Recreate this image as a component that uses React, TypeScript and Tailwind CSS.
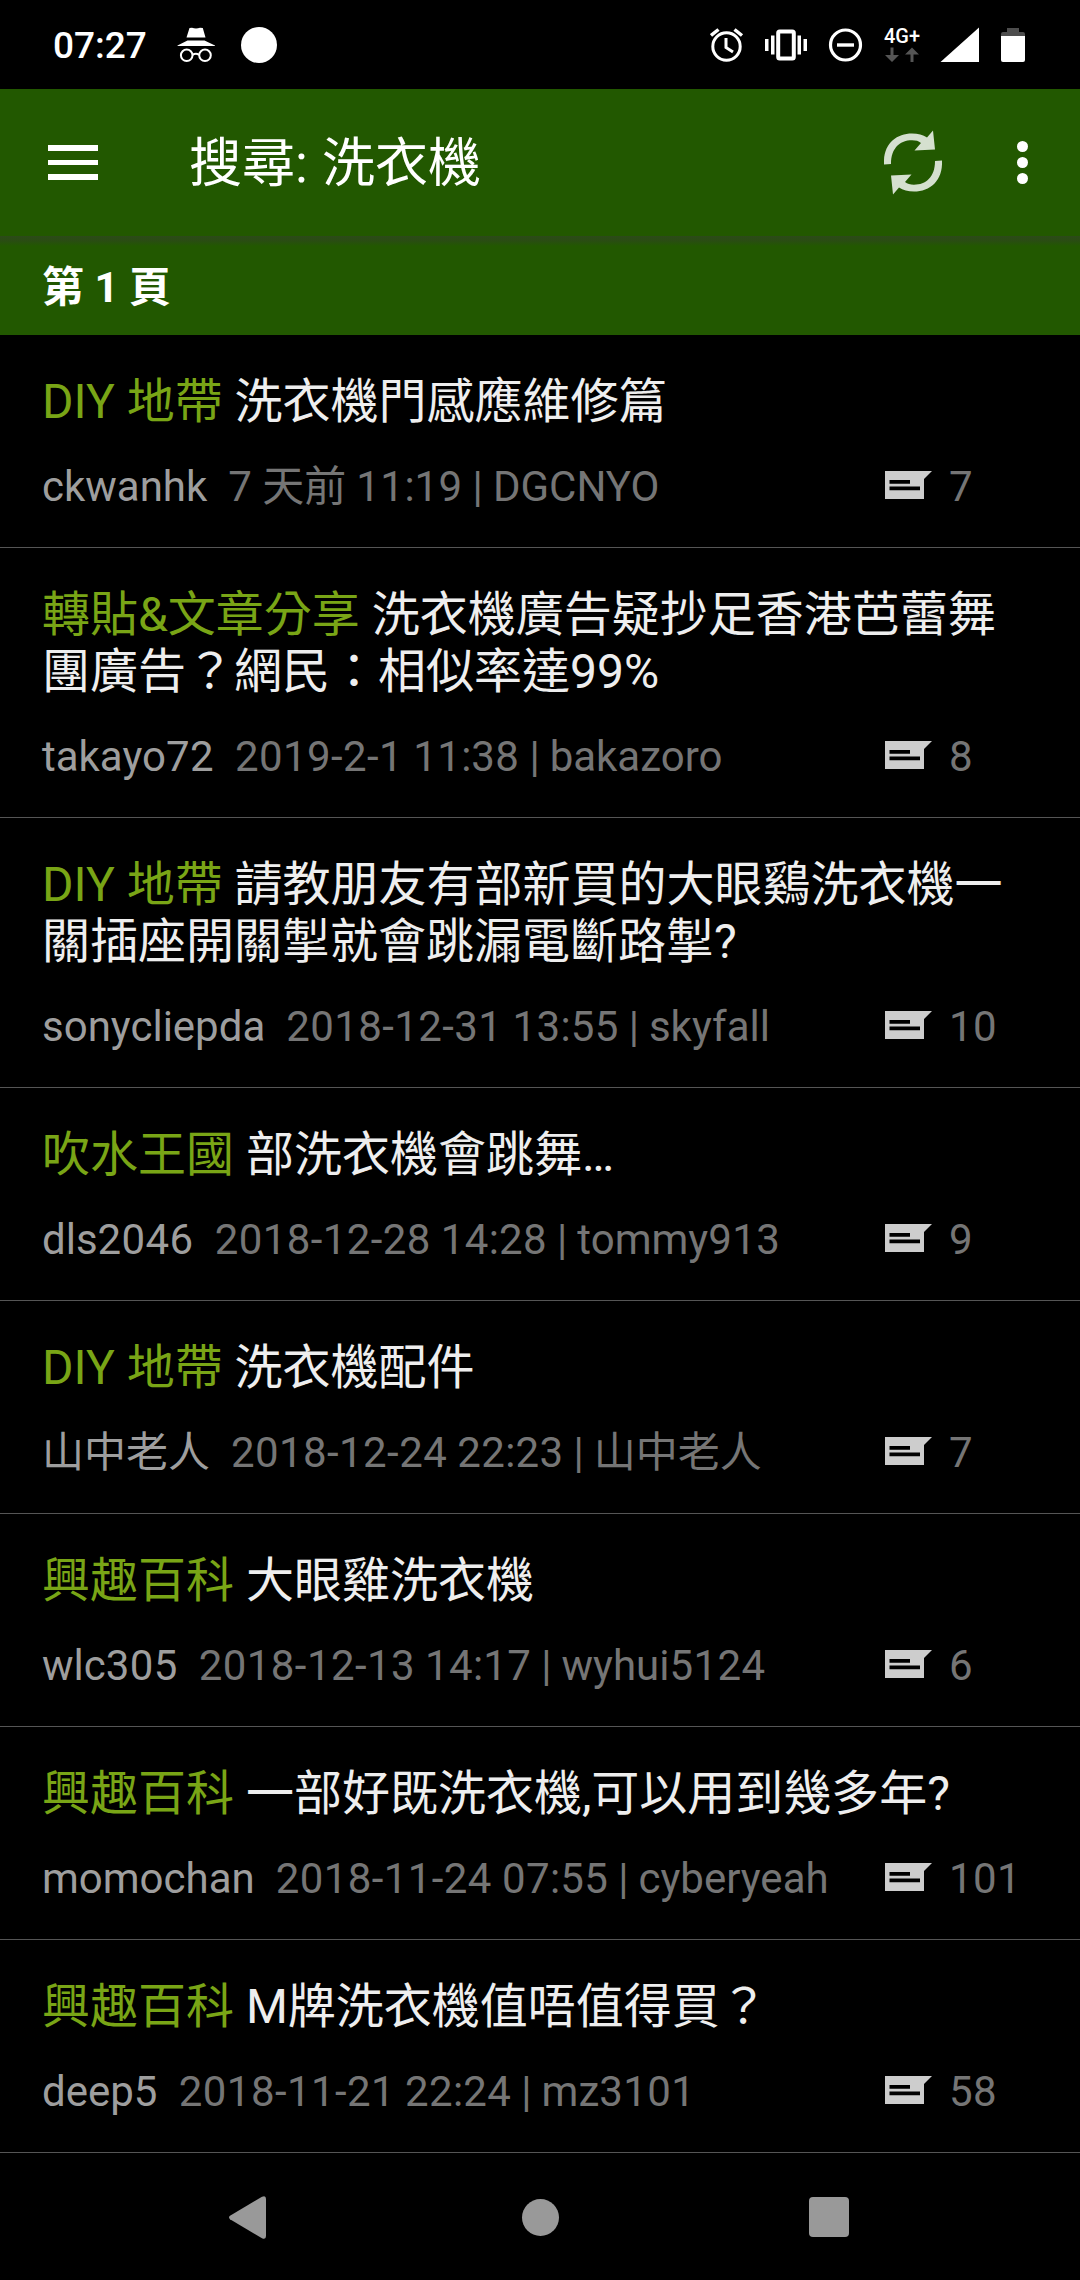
type Thread = {
  forum: string;
  title: string;
  author: string;
  time: string;
  lastReply: string;
  replies: number;
};

const threads: Thread[] = [
  { forum: "DIY 地帶", title: "洗衣機門感應維修篇", author: "ckwanhk", time: "7 天前 11:19", lastReply: "DGCNYO", replies: 7 },
  { forum: "轉貼&文章分享", title: "洗衣機廣告疑抄足香港芭蕾舞團廣告？網民：相似率達99%", author: "takayo72", time: "2019-2-1 11:38", lastReply: "bakazoro", replies: 8 },
  { forum: "DIY 地帶", title: "請教朋友有部新買的大眼鷄洗衣機一關插座開關掣就會跳漏電斷路掣?", author: "sonycliepda", time: "2018-12-31 13:55", lastReply: "skyfall", replies: 10 },
  { forum: "吹水王國", title: "部洗衣機會跳舞…", author: "dls2046", time: "2018-12-28 14:28", lastReply: "tommy913", replies: 9 },
  { forum: "DIY 地帶", title: "洗衣機配件", author: "山中老人", time: "2018-12-24 22:23", lastReply: "山中老人", replies: 7 },
  { forum: "興趣百科", title: "大眼雞洗衣機", author: "wlc305", time: "2018-12-13 14:17", lastReply: "wyhui5124", replies: 6 },
  { forum: "興趣百科", title: "一部好既洗衣機,可以用到幾多年?", author: "momochan", time: "2018-11-24 07:55", lastReply: "cyberyeah", replies: 101 },
  { forum: "興趣百科", title: "M牌洗衣機值唔值得買？", author: "deep5", time: "2018-11-21 22:24", lastReply: "mz3101", replies: 58 },
];

function StatusBar() {
  return (
    <div className="flex h-[89px] items-center justify-between pl-[53px] pr-[54px] text-white">
      <div className="flex items-center">
        <span className="w-[93px] whitespace-nowrap pt-[2px] text-[37px] font-medium leading-[44px]">07:27</span>
        <svg className="ml-[31px]" width="38" height="38" viewBox="0 0 38 38" fill="#fff">
          <path d="M12.500 2 L15 1.800 Q19 3.200 23 1.800 L25.800 2 L28.500 11.500 H9.500 Z" />
          <path d="M10.500 14.500 H27.500 L38 19.500 V20 H0.500 V19.500 Z" />
          <g fill="none" stroke="#fff" strokeWidth="2">
            <circle cx="9.700" cy="29.300" r="5.800" />
            <circle cx="28" cy="29.300" r="5.800" />
            <path d="M15.500 28.800 Q19 26.800 22 28.800" />
          </g>
        </svg>
        <span className="ml-[26px] size-9 rounded-full bg-white" />
      </div>
      <StatusIcons />
    </div>
  );
}

function StatusIcons() {
  return (
    <svg width="316" height="64" viewBox="710 12 316 64" fill="#fff">
      {/* alarm */}
      <g fill="none" stroke="#fff" strokeWidth="3">
        <circle cx="726.500" cy="45.500" r="13.700" />
        <path d="M726 37 V46.500 L733 51" />
        <path d="M711 34.500 L718.500 28.500 M742 34.500 L734.500 28.500" strokeWidth="3.500" />
      </g>
      {/* vibrate */}
      <path d="M765 38h3.500v12H765zM771 34.500h3.500v19H771zM797.500 34.500h3.500v19h-3.500zM803.500 38h3.500v12h-3.500z" />
      <rect x="778.200" y="30.500" width="15.600" height="27" rx="1.500" fill="none" stroke="#fff" strokeWidth="4" />
      {/* do not disturb */}
      <circle cx="845.500" cy="44" r="15" fill="none" stroke="#fff" strokeWidth="3.200" />
      <path d="M837 42.300h17v3.400h-17z" />
      {/* mobile data */}
      <text x="884" y="42" fontSize="21" fontWeight="500" textLength="36" lengthAdjust="spacingAndGlyphs">4G+</text>
      <path d="M890.500 46.500h3v7.500h5.500l-7 7-7-7h5.500zM910.500 61h3v-7.500h5.500l-7-7-7 7h5.500z" fill="#555" />
      {/* signal */}
      <path d="M979 26.500V61h-38.500z" />
      {/* battery */}
      <path d="M1007 27h12v4h4a2 2 0 0 1 2 2v2.500h-24V33a2 2 0 0 1 2-2h4z" fill="#4d4d4d" />
      <path d="M1001 35h24v24a2 2 0 0 1-2 2h-20a2 2 0 0 1-2-2z" />
    </svg>
  );
}

function Toolbar() {
  return (
    <header className="flex h-[147px] items-center bg-[#225800] pl-[48px] pr-[52px] text-white">
      <div className="flex w-[50px] flex-col gap-[9px]">
        <span className="h-[6px] bg-white" />
        <span className="h-[5px] bg-white" />
        <span className="h-[6px] bg-white" />
      </div>
      <h1 className="ml-[91px] flex-1 pt-[2px] text-[53px] leading-[62px] [word-spacing:1px]">搜尋: 洗衣機</h1>
      <svg width="60" height="66" viewBox="0 0 60 66" fill="#d5e0cf">
        <path d="M0 34.500 C-1 14 12 3.500 28 3.500 C34 3.500 39 5 43 7.500 L49 0.500 L51 19.500 L30.500 20.500 L37 13 C34.500 11 32 10.300 28 10.300 C16 10.300 7 18 7 34 Z" />
        <path d="M58 30.500 C59 51 46 61.500 30 61.500 C24 61.500 19 60 15 57.500 L9 64.500 L7 45.500 L27.500 44.500 L21 52 C23.500 54 26 54.700 30 54.700 C42 54.700 51 47 51 31 Z" />
      </svg>
      <div className="ml-[73px] flex flex-col gap-[5px]">
        <span className="size-[11px] rounded-full bg-white" />
        <span className="size-[11px] rounded-full bg-white" />
        <span className="size-[11px] rounded-full bg-white" />
      </div>
    </header>
  );
}

function ReplyIcon() {
  return (
    <svg className="mt-[9px] shrink-0" width="47" height="28" viewBox="0 0 47 28">
      <path d="M0 0H47L39 8V28H0Z" fill="#cdcdcd" />
      <path d="M4.500 9H25V12.800H4.500ZM4.500 15.500H35V19.300H4.500Z" fill="#000" />
    </svg>
  );
}

// Digits and dashes are set slightly wider than the letters around them.
function MetaText({ text }: { text: string }) {
  return text.split(/([\d-]+)/).map((part, index) =>
    index % 2 === 1 ? (
      <span key={index} className="tracking-[0.41px]">
        {part}
      </span>
    ) : (
      part
    )
  );
}

function ThreadRow({ thread }: { thread: Thread }) {
  return (
    <li className="border-b border-[#555] px-[42px] pb-[35px] pt-[38px]">
      <h2 className="text-[48px] leading-[57px] text-[#eee] [word-break:break-all]">
        <span className="text-[#79a516]">{thread.forum}</span> {thread.title}
      </h2>
      <div className="mt-8 flex h-[50px] text-[42px] leading-[50px] text-[#757575] [word-spacing:-0.4px]">
        <span className="text-[#9e9e9e]">
          <MetaText text={thread.author} />
        </span>
        <span className="ml-[21px] flex-1 whitespace-nowrap">
          <MetaText text={`${thread.time} | ${thread.lastReply}`} />
        </span>
        <div className="flex w-[153px] shrink-0">
          <ReplyIcon />
          <span className="ml-[17px]">
            <MetaText text={String(thread.replies)} />
          </span>
        </div>
      </div>
    </li>
  );
}

function NavigationBar() {
  return (
    <nav className="flex h-[128px] items-center pl-[229px]">
      <svg width="37" height="43" viewBox="0 0 37 43" fill="#999">
        <path d="M33 0.800 Q37 -1 37 3 V40 Q37 44 33 42.200 L1 23.200 Q-1 21.500 1 19.800 Z" />
      </svg>
      <span className="ml-[256px] size-[37px] rounded-full bg-[#999]" />
      <span className="ml-[250px] size-[40px] rounded-[4px] bg-[#999]" />
    </nav>
  );
}

export default function App() {
  return (
    <div className="h-[2280px] w-[1080px] overflow-hidden bg-black font-[Roboto,'Noto_Sans_CJK_TC',sans-serif]">
      <StatusBar />
      <Toolbar />
      <div className="h-[99px] bg-[#225800] bg-[linear-gradient(#2c4a19,#294d12_50%,#225800)] bg-[length:100%_10px] bg-no-repeat px-[42px] pt-[27px] text-[42px] font-bold leading-[50px] text-white">
        第 1 頁
      </div>
      <ul>
        {threads.map((thread) => (
          <ThreadRow key={thread.time} thread={thread} />
        ))}
      </ul>
      <NavigationBar />
    </div>
  );
}
